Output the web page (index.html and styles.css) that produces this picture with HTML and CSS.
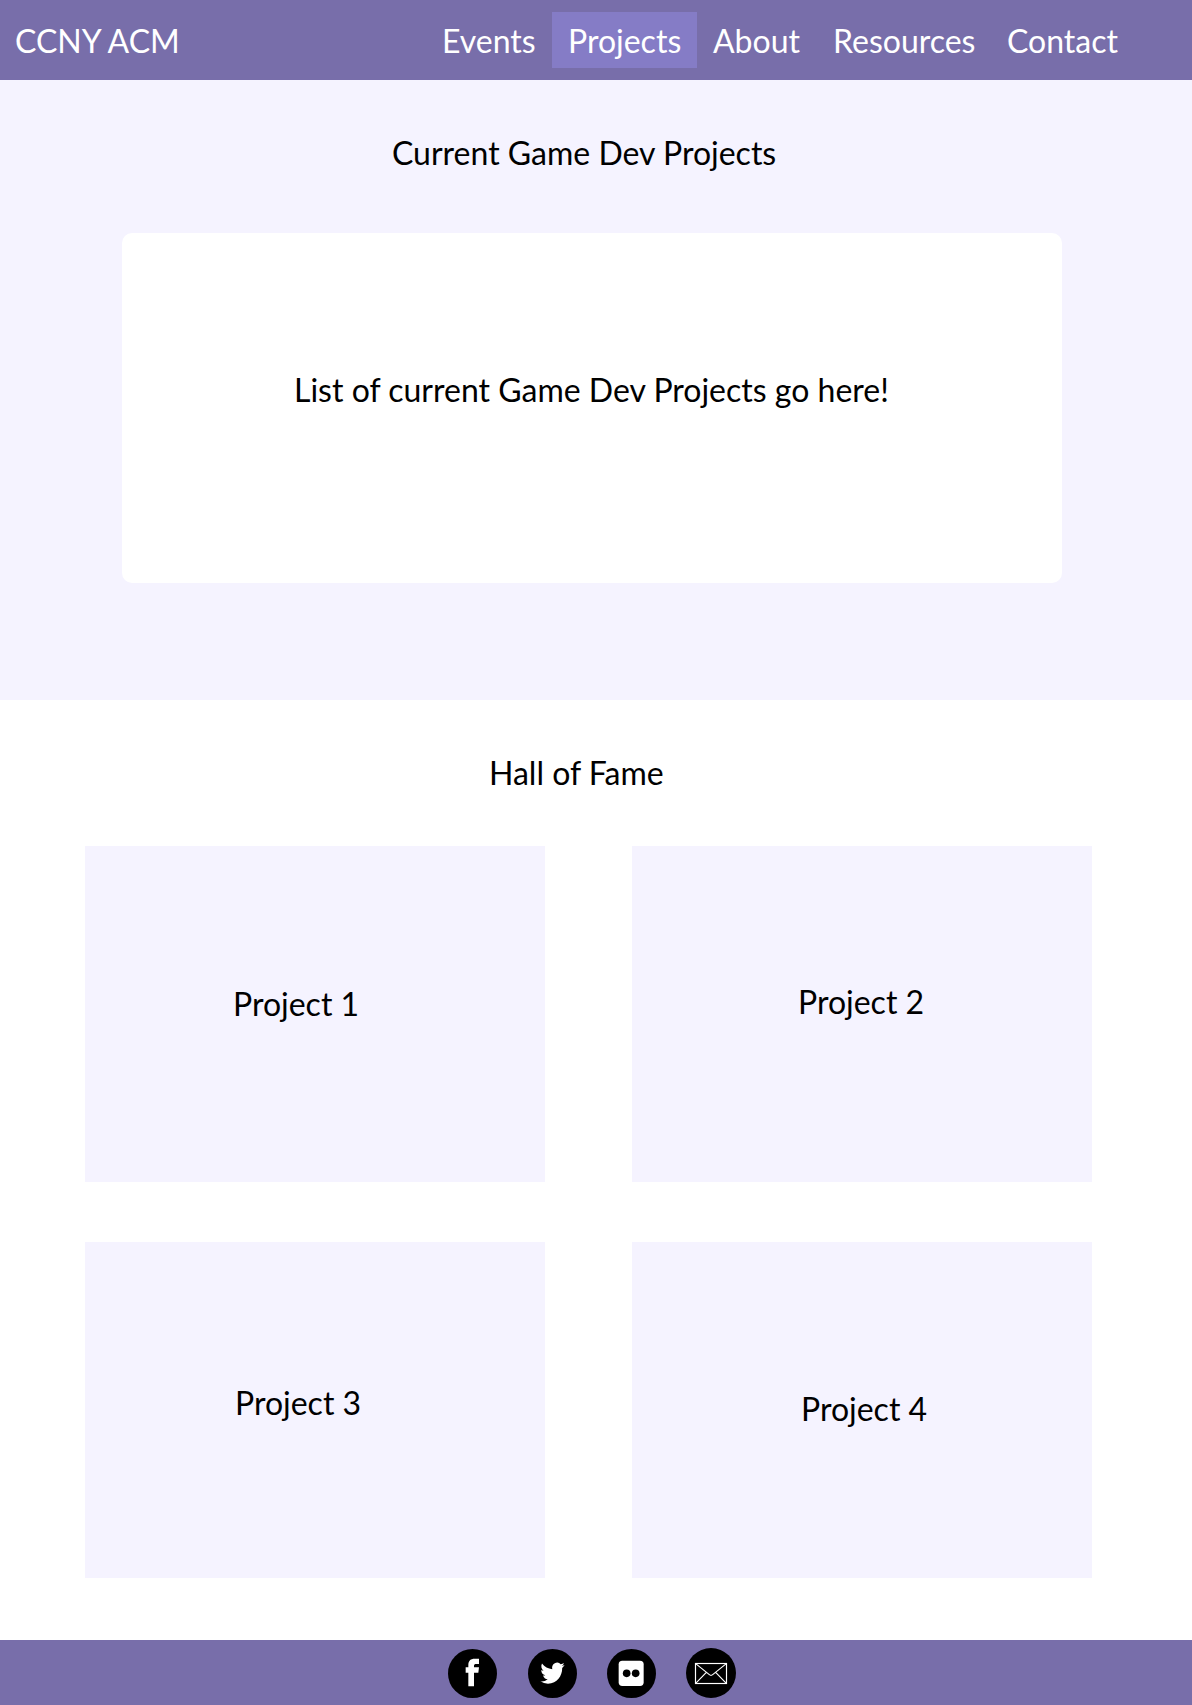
FILE: index.html
```html
<!DOCTYPE html>
<html lang="en">
<head>
<meta charset="utf-8">
<title>CCNY ACM - Projects</title>
<link rel="stylesheet" href="styles.css">
</head>
<body>
<header class="header">
  <a class="brand">CCNY ACM</a>
  <nav class="nav">
    <a class="nav-item">Events</a>
    <a class="nav-item active">Projects</a>
    <a class="nav-item">About</a>
    <a class="nav-item">Resources</a>
    <a class="nav-item">Contact</a>
  </nav>
</header>
<main>
  <section class="current">
    <h2 class="current-title">Current Game Dev Projects</h2>
    <div class="current-list">List of current Game Dev Projects go here!</div>
  </section>
  <section class="fame">
    <h2 class="fame-title">Hall of Fame</h2>
    <div class="grid">
      <article class="card card-one">Project 1</article>
      <article class="card card-two">Project 2</article>
      <article class="card card-three">Project 3</article>
      <article class="card card-four">Project 4</article>
    </div>
  </section>
</main>
<footer class="footer">
  <svg class="icon facebook" viewBox="0 0 147 147">
    <circle cx="73.5" cy="73.5" r="73.5"/>
    <path fill="#fff" d="M61 112V71H53V55H61V48C61 35 68 29 80 29H93V45H85C80 45 78 47 78 51V55H93L91 71H78V112Z"/>
  </svg>
  <svg class="icon twitter" viewBox="0 0 147 147">
    <circle cx="73.5" cy="73.5" r="73.5"/>
    <path fill="#fff" transform="translate(37 33.5) scale(3.04 3.25)" d="M23.95 4.57a10 10 0 0 1-2.82.77 4.96 4.96 0 0 0 2.16-2.72c-.95.55-2 .95-3.13 1.18a4.92 4.92 0 0 0-8.38 4.48C7.69 8.09 4.07 6.13 1.64 3.16a4.92 4.92 0 0 0 1.52 6.57 4.9 4.9 0 0 1-2.23-.61v.06a4.92 4.92 0 0 0 3.95 4.83 5 5 0 0 1-2.21.08 4.94 4.94 0 0 0 4.6 3.42A9.87 9.87 0 0 1 0 19.54a14 14 0 0 0 7.56 2.21c9.05 0 14-7.5 14-13.98 0-.21 0-.42-.02-.63a9.94 9.94 0 0 0 2.41-2.57Z"/>
  </svg>
  <svg class="icon flickr" viewBox="0 0 147 147">
    <circle cx="73.5" cy="73.5" r="73.5"/>
    <rect x="35" y="35" width="75" height="76" rx="11" fill="#fff"/>
    <circle cx="59" cy="73" r="11.5"/>
    <circle cx="86" cy="73" r="11.5"/>
  </svg>
  <svg class="icon mail" viewBox="0 0 150 150">
    <circle cx="75" cy="75" r="75"/>
    <g fill="none" stroke="#fff" stroke-width="3.5">
      <rect x="28.5" y="46.5" width="93" height="60"/>
      <path d="M29 47L70 80Q75 84 80 80L121 47M29 106L61 73M121 106L89 73"/>
    </g>
  </svg>
</footer>
</body>
</html>
```

FILE: styles.css
```css
* {
  box-sizing: border-box;
}

body {
  margin: 0;
  background: #fff;
  color: #000;
  font: 400 32px/38px Lato, "Liberation Sans", sans-serif;
}

h2 {
  margin: 0;
  font-size: inherit;
  font-weight: 400;
}

.header {
  display: flex;
  align-items: center;
  height: 80px;
  padding-left: 15px;
  background: #786eaa;
  color: #fff;
}

.brand {
  width: 411px;
  padding-top: 2px;
}

.nav {
  display: grid;
  grid-template-columns: 126px 145px 120px 174px 144px;
}

.nav-item {
  padding: 10px 0 8px 16px;
}

.active {
  background: #857cc6;
}

.current {
  height: 620px;
  padding: 54px 130px 0 122px;
  background: #f5f3ff;
}

.current-title {
  padding-left: 270px;
}

.current-list {
  height: 350px;
  margin-top: 61px;
  padding: 138px 0 0 172px;
  border-radius: 10px;
  background: #fff;
}

.fame {
  height: 940px;
  padding: 54px 100px 0 85px;
}

.fame-title {
  padding-left: 404px;
}

.grid {
  display: grid;
  grid-template-columns: 460px 460px;
  grid-auto-rows: 336px;
  gap: 60px 87px;
  margin-top: 54px;
}

.card {
  background: #f5f3ff;
}

.card-one {
  padding: 139px 0 0 148px;
}

.card-two {
  padding: 137px 0 0 166px;
}

.card-three {
  padding: 142px 0 0 150px;
}

.card-four {
  padding: 148px 0 0 169px;
}

.footer {
  display: flex;
  align-items: center;
  height: 65px;
  padding: 1px 0 0 448px;
  background: #786eaa;
}

.icon {
  width: 49px;
  height: 49px;
}

.twitter {
  margin-left: 31px;
}

.flickr {
  margin-left: 30px;
}

.mail {
  width: 50px;
  height: 50px;
  margin-left: 30px;
}
```
